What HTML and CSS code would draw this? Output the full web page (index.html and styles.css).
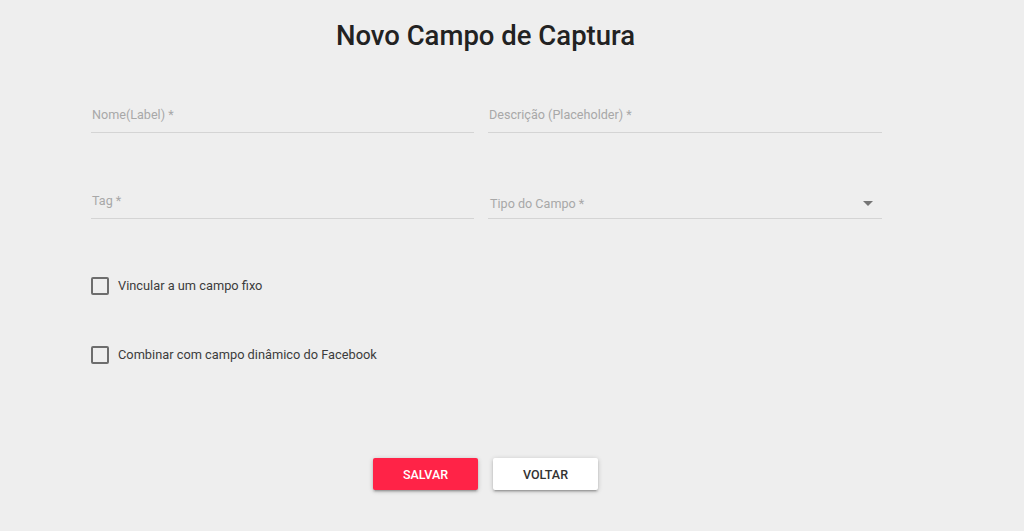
FILE: index.html
```html
<!DOCTYPE html>
<html lang="pt-BR">
<head>
<meta charset="utf-8">
<title>Novo Campo de Captura</title>
<link rel="stylesheet" href="styles.css">
</head>
<body>
<div class="page">
  <h1 class="title">Novo Campo de Captura</h1>
  <form class="form">
    <div class="grid">
      <div class="field field-a"><span class="label">Nome(Label) *</span></div>
      <div class="field field-b"><span class="label">Descrição (Placeholder) *</span></div>
      <div class="field field-a row2"><span class="label">Tag *</span></div>
      <div class="field field-b row2 select"><span class="label">Tipo do Campo *</span><span class="arrow"></span></div>
    </div>
    <label class="check check-1"><span class="box"></span><span class="check-text">Vincular a um campo fixo</span></label>
    <label class="check check-2"><span class="box"></span><span class="check-text">Combinar com campo dinâmico do Facebook</span></label>
    <div class="actions">
      <button type="button" class="btn btn-primary">Salvar</button>
      <button type="button" class="btn btn-default">Voltar</button>
    </div>
  </form>
</div>
</body>
</html>
```
FILE: styles.css
```css
* { box-sizing: border-box; }
html, body { margin: 0; padding: 0; }
body {
  background: #eeeeee;
  font-family: Roboto, "Noto Sans", sans-serif;
  color: #333;
  height: 531px;
  overflow: hidden;
}
.page {
  width: 971px;
}
.title {
  margin: 0;
  padding-top: 20px;
  text-align: center;
  font-size: 27.5px;
  font-weight: 500;
  line-height: 32px;
  color: #222;
}
.form {
  width: 791px;
  margin: 0 auto 0 91px;
}
.grid {
  display: grid;
  grid-template-columns: 383px 394px;
  column-gap: 14px;
  row-gap: 36px;
  margin-top: 31px;
}
.field {
  height: 50px;
  display: flex;
  align-items: flex-end;
  padding-bottom: 9px;
  border-bottom: 1px solid #d4d4d4;
  position: relative;
}
.label {
  font-size: 12.6px;
  line-height: 16px;
  color: #a8a8a8;
  padding-left: 1px;
}
.select .label { padding-bottom: 0; padding-left: 2px; }
.select { padding-bottom: 6px; }
.arrow {
  position: absolute;
  right: 9px;
  bottom: 12px;
  width: 0;
  height: 0;
  border-left: 5px solid transparent;
  border-right: 5px solid transparent;
  border-top: 5px solid #757575;
}
.check {
  display: flex;
  align-items: center;
  gap: 9px;
  height: 18px;
}
.check-1 { margin-top: 58px; }
.check-2 { margin-top: 51px; }
.box {
  width: 18px;
  height: 18px;
  border: 2px solid #6d6d6d;
  border-radius: 2px;
  flex: none;
}
.check-text {
  font-size: 12.8px;
  color: #3c3c3c;
  line-height: 16px;
}
.actions {
  display: flex;
  justify-content: center;
  gap: 15px;
  margin-top: 94px;
  margin-left: -2px;
}
.btn {
  width: 105px;
  height: 32px;
  border: none;
  border-radius: 2px;
  font-family: Roboto, "Noto Sans", sans-serif;
  font-size: 12.5px;
  font-weight: 500;
  text-transform: uppercase;
  box-shadow: 0 1px 5px rgba(0,0,0,0.2), 0 2px 2px rgba(0,0,0,0.14), 0 3px 1px -2px rgba(0,0,0,0.12);
  cursor: pointer;
}
.btn-primary { background: #ff2347; color: #fff; }
.btn-default { background: #fff; color: #333; }
```
